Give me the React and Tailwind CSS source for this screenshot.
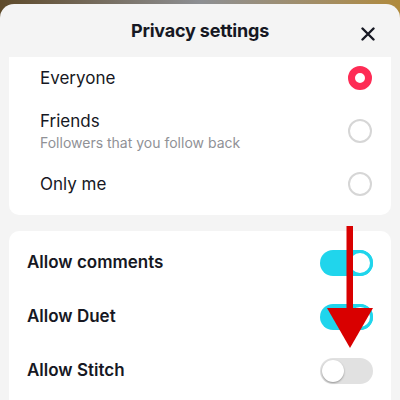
import React from 'react';

const font = { fontFamily: 'Inter, "Noto Sans", sans-serif' };

function Radio({ checked }) {
  if (checked) {
    return <div className="w-[24px] h-[24px] rounded-full border-[7px] border-[#fe2c55] bg-white" />;
  }
  return <div className="w-[24px] h-[24px] rounded-full border-2 border-[#d6d6d6] bg-white" />;
}

function Toggle({ on }) {
  if (on) {
    return (
      <div className="w-[53px] h-[26px] rounded-full bg-[#20d5ec] flex items-center justify-end">
        <div className="w-[26px] h-[26px] rounded-full bg-white border-[3px] border-[#20d5ec]" />
      </div>
    );
  }
  return (
    <div className="w-[53px] h-[26px] rounded-full bg-[#e1e1e1] flex items-center px-[2px]">
      <div className="w-[22px] h-[22px] rounded-full bg-white shadow-[0_1px_2px_rgba(0,0,0,0.35)]" />
    </div>
  );
}

const AUDIENCE = [
  { label: 'Everyone', checked: true, h: 'h-[42px]' },
  { label: 'Friends', sub: 'Followers that you follow back', h: 'h-[64px]' },
  { label: 'Only me', h: 'h-[42px]' },
];

const SWITCHES = [
  { label: 'Allow comments', on: true },
  { label: 'Allow Duet', on: true },
  { label: 'Allow Stitch', on: false },
];

export default function App() {
  return (
    <div className="w-[400px] h-[400px] overflow-hidden relative bg-gradient-to-r from-[#5e4a2a] via-[#8d8f93] to-[#b08a3a]" style={font}>
      <div className="mt-[4px] h-[396px] bg-[#f4f4f4] rounded-t-[14px] flex flex-col">
        {/* Header */}
        <div className="h-[53px] flex items-center justify-center relative shrink-0">
          <h1 className="text-[18px] font-bold text-[#161823] tracking-[-0.2px]">Privacy settings</h1>
          <svg className="absolute left-[361px] top-[23px]" width="14" height="14" viewBox="0 0 14 14">
            <path d="M1.5 1.5 L12.5 12.5 M12.5 1.5 L1.5 12.5" stroke="#161823" strokeWidth="2.4" strokeLinecap="round" />
          </svg>
        </div>

        {/* Audience card */}
        <div className="mx-[9px] bg-white rounded-b-[10px] pb-[10px] shrink-0">
          {AUDIENCE.map(a => (
            <div key={a.label} className={`${a.h} flex items-center justify-between pl-[31px] pr-[19px]`}>
              <div>
                <p className="text-[17px] text-[#161823] leading-[22px]">{a.label}</p>
                {a.sub && <p className="text-[14px] text-[#909196] leading-[20px] mt-[1px]">{a.sub}</p>}
              </div>
              <Radio checked={a.checked} />
            </div>
          ))}
        </div>

        {/* Interaction card */}
        <div className="mx-[9px] mt-[16px] bg-white rounded-t-[10px] pt-[5px] flex-1">
          {SWITCHES.map(s => (
            <div key={s.label} className="h-[54px] flex items-center justify-between pl-[18px] pr-[18px]">
              <span className="text-[17px] font-semibold text-[#161823]">{s.label}</span>
              <Toggle on={s.on} />
            </div>
          ))}
        </div>
      </div>

      {/* Red annotation arrow */}
      <svg className="absolute left-[320px] top-[224px]" width="60" height="130" viewBox="0 0 60 130">
        <rect x="26.5" y="2" width="6.5" height="86" fill="#d90000" />
        <polygon points="7,84 53,84 30,124" fill="#d90000" />
      </svg>
    </div>
  );
}
